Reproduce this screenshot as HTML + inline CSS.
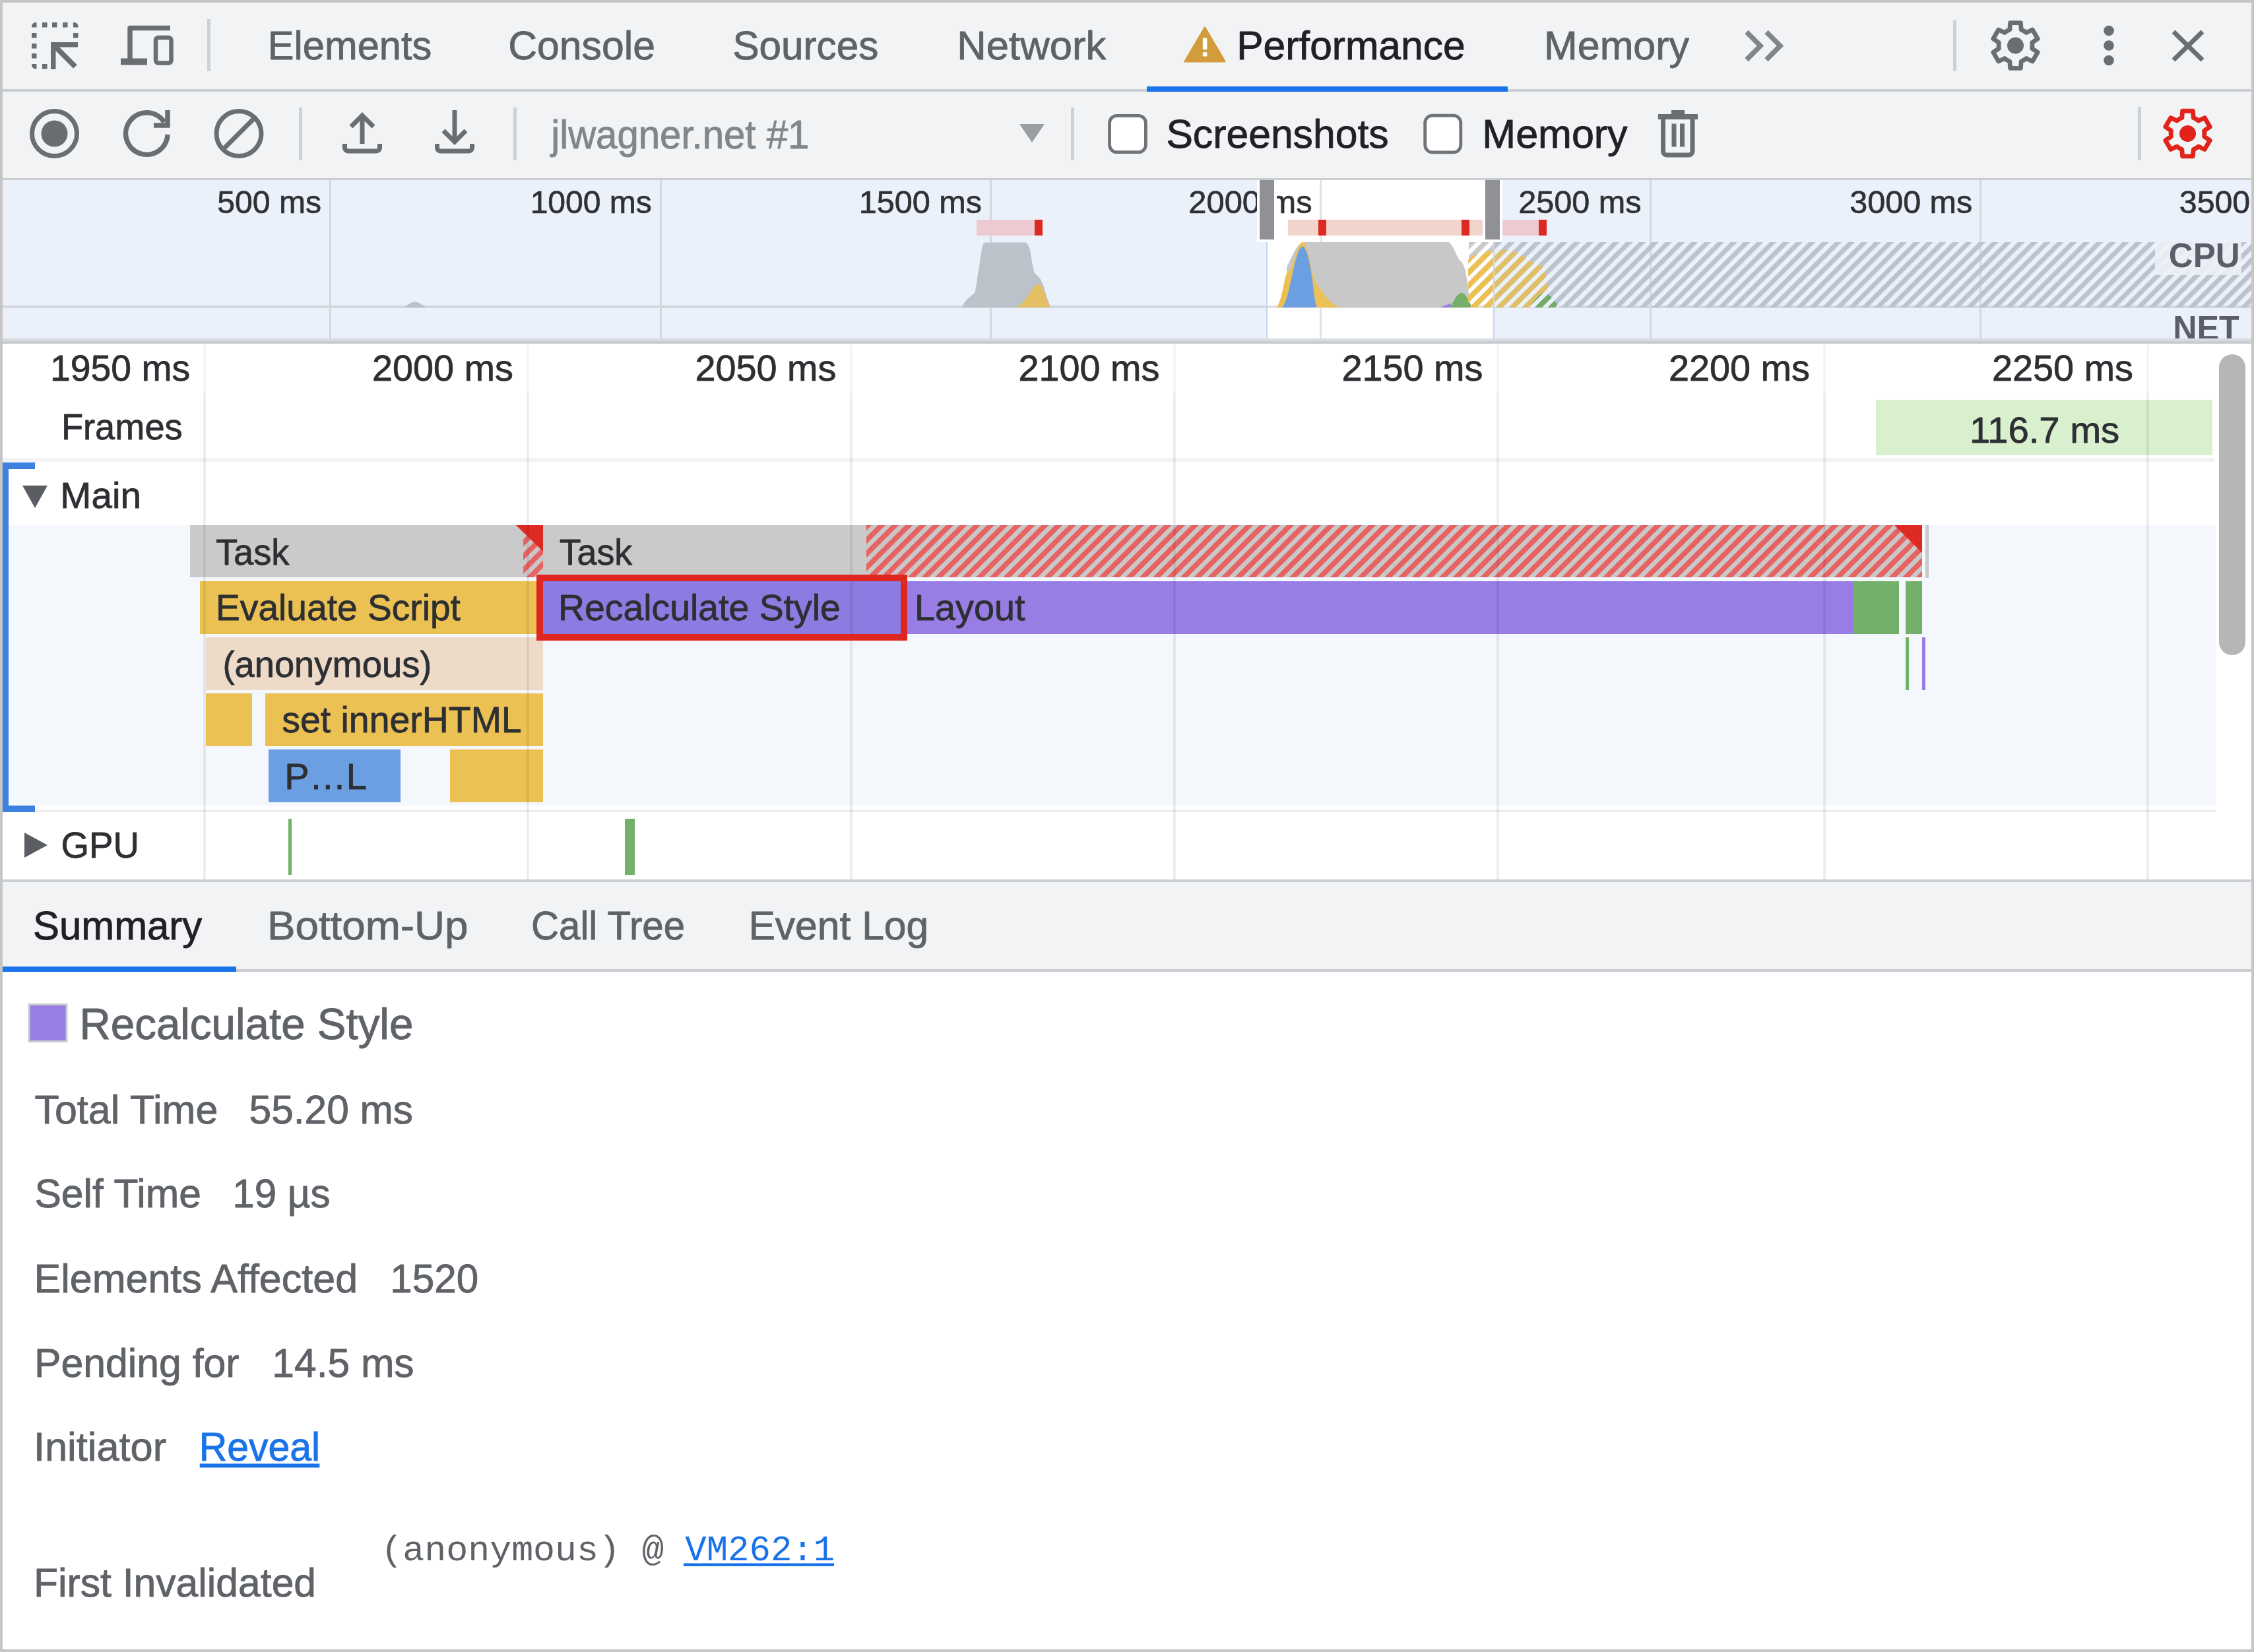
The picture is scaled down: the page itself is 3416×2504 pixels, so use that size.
<!DOCTYPE html>
<html><head><meta charset="utf-8"><title>DevTools Performance</title>
<style>html,body{margin:0;padding:0;background:#c6c6c6;width:3416px;height:2504px;overflow:hidden}</style>
</head><body>
<svg width="3416" height="2504" viewBox="0 0 3416 2504" style="display:block"><rect x="0" y="0" width="3416" height="2504" fill="#c6c6c6"/>
<rect x="4" y="4" width="3408" height="2496" fill="#ffffff" />
<rect x="4" y="4" width="3408" height="131" fill="#f1f3f4" />
<rect x="4" y="135" width="3408" height="4" fill="#cacdd1" />
<path d="M48 41.5 V40 A6 6 0 0 1 54 34 H55.5 V41.5 Z" fill="#6a6d71"/>
<rect x="64" y="34" width="7.5" height="7.5" fill="#6a6d71"/>
<rect x="79" y="34" width="7.5" height="7.5" fill="#6a6d71"/>
<rect x="95" y="34" width="7.5" height="7.5" fill="#6a6d71"/>
<path d="M111 34 H112.5 A6 6 0 0 1 118.5 40 V41.5 H111 Z" fill="#6a6d71"/>
<rect x="48" y="50" width="7.5" height="7.5" fill="#6a6d71"/>
<rect x="48" y="66" width="7.5" height="7.5" fill="#6a6d71"/>
<rect x="48" y="81" width="7.5" height="7.5" fill="#6a6d71"/>
<path d="M48 97 H55.5 V104.5 H54 A6 6 0 0 1 48 98.5 Z" fill="#6a6d71"/>
<rect x="111" y="50" width="7.5" height="7.5" fill="#6a6d71"/>
<rect x="64" y="97" width="7.5" height="7.5" fill="#6a6d71"/>
<rect x="77" y="64" width="41" height="7.5" fill="#6a6d71"/>
<rect x="77" y="64" width="7.5" height="41" fill="#6a6d71"/>
<path d="M82 69 L114 101" stroke="#6a6d71" stroke-width="8"/>
<path d="M258 42.5 H197 V92" fill="none" stroke="#6a6d71" stroke-width="7.5" stroke-linejoin="round"/>
<rect x="183" y="88.5" width="40" height="10" fill="#6a6d71"/>
<rect x="236" y="57" width="23.5" height="38.5" rx="4" fill="none" stroke="#6a6d71" stroke-width="6.5"/>
<rect x="314" y="29" width="5" height="79" fill="#cdd0d4" />
<text x="405.82" y="90.28" font-family='"Liberation Sans", sans-serif' font-size="61" font-weight="normal" fill="#5f6368" stroke="#5f6368" stroke-width="0.85" stroke-linejoin="round" textLength="248.61" lengthAdjust="spacingAndGlyphs">Elements</text>
<text x="770.22" y="90.28" font-family='"Liberation Sans", sans-serif' font-size="61" font-weight="normal" fill="#5f6368" stroke="#5f6368" stroke-width="0.85" stroke-linejoin="round" textLength="222.73" lengthAdjust="spacingAndGlyphs">Console</text>
<text x="1110.42" y="90.28" font-family='"Liberation Sans", sans-serif' font-size="61" font-weight="normal" fill="#5f6368" stroke="#5f6368" stroke-width="0.85" stroke-linejoin="round" textLength="220.92" lengthAdjust="spacingAndGlyphs">Sources</text>
<text x="1450.33" y="90.28" font-family='"Liberation Sans", sans-serif' font-size="61" font-weight="normal" fill="#5f6368" stroke="#5f6368" stroke-width="0.85" stroke-linejoin="round" textLength="225.85" lengthAdjust="spacingAndGlyphs">Network</text>
<path d="M1826 42 L1856 93 L1796 93 Z" fill="#d29c3c" stroke="#d29c3c" stroke-width="3" stroke-linejoin="round"/>
<rect x="1822.8" y="57.5" width="6.6" height="17.8" rx="1.5" fill="#ffffff"/>
<rect x="1822.8" y="79" width="6.6" height="6.6" rx="1.5" fill="#ffffff"/>
<text x="1874.22" y="90.28" font-family='"Liberation Sans", sans-serif' font-size="61" font-weight="normal" fill="#202124" stroke="#202124" stroke-width="0.85" stroke-linejoin="round" textLength="346.34" lengthAdjust="spacingAndGlyphs">Performance</text>
<text x="2340.12" y="90.28" font-family='"Liberation Sans", sans-serif' font-size="61" font-weight="normal" fill="#5f6368" stroke="#5f6368" stroke-width="0.85" stroke-linejoin="round" textLength="219.83" lengthAdjust="spacingAndGlyphs">Memory</text>
<path d="M2647 48.5 L2668 69.5 L2647 90.5 M2677 48.5 L2698 69.5 L2677 90.5" fill="none" stroke="#80868b" stroke-width="7.5"/>
<rect x="1738" y="131" width="547" height="8" fill="#1a73e8" />
<rect x="2960" y="30" width="5" height="78" fill="#cdd0d4" />
<path d="M3041.8 46.9 L3045.8 45.0 L3046.6 34.7 L3062.4 34.7 L3063.2 45.0 L3067.2 46.9 L3070.9 49.5 L3080.2 45.0 L3088.2 58.7 L3079.6 64.6 L3080.0 69.0 L3079.6 73.4 L3088.2 79.3 L3080.2 93.0 L3070.9 88.5 L3067.2 91.1 L3063.2 93.0 L3062.4 103.3 L3046.6 103.3 L3045.8 93.0 L3041.8 91.1 L3038.1 88.5 L3028.8 93.0 L3020.8 79.3 L3029.4 73.4 L3029.0 69.0 L3029.4 64.6 L3020.8 58.7 L3028.8 45.0 L3038.1 49.5 Z" fill="none" stroke="#6a6d71" stroke-width="6.8" stroke-linejoin="round"/>
<circle cx="3054.5" cy="69" r="12.5" fill="#6a6d71"/>
<circle cx="3196" cy="46.5" r="7.8" fill="#6a6d71"/>
<circle cx="3196" cy="69" r="7.8" fill="#6a6d71"/>
<circle cx="3196" cy="91.5" r="7.8" fill="#6a6d71"/>
<path d="M3294 48 L3338 91 M3338 48 L3294 91" stroke="#6a6d71" stroke-width="7"/>
<rect x="4" y="139" width="3408" height="131" fill="#f1f3f4" />
<rect x="4" y="270" width="3408" height="3" fill="#cacdd1" />
<circle cx="82.5" cy="202.5" r="34" fill="none" stroke="#6a6d71" stroke-width="7"/>
<circle cx="82.5" cy="202.5" r="20" fill="#6a6d71"/>
<path d="M254.1 204 A31.8 31.8 0 1 1 249 185.2" fill="none" stroke="#6a6d71" stroke-width="7.5"/>
<path d="M233 190 H254 V167" fill="none" stroke="#6a6d71" stroke-width="7.5"/>
<circle cx="362" cy="202.5" r="34" fill="none" stroke="#6a6d71" stroke-width="7"/>
<path d="M338 226.5 L386 178.5" stroke="#6a6d71" stroke-width="7"/>
<rect x="453" y="163" width="5" height="80" fill="#cdd0d4" />
<path d="M549 218 V176 M532 192 L549 175 L566 192" fill="none" stroke="#6a6d71" stroke-width="7"/>
<path d="M522.5 218 V224 A5 5 0 0 0 527.5 229 H570.5 A5 5 0 0 0 575.5 224 V218" fill="none" stroke="#6a6d71" stroke-width="7"/>
<path d="M689 167 V212 M672 198 L689 215 L706 198" fill="none" stroke="#6a6d71" stroke-width="7"/>
<path d="M662.5 218 V224 A5 5 0 0 0 667.5 229 H710.5 A5 5 0 0 0 715.5 224 V218" fill="none" stroke="#6a6d71" stroke-width="7"/>
<rect x="778" y="163" width="5" height="80" fill="#cdd0d4" />
<text x="835.33" y="224.77" font-family='"Liberation Sans", sans-serif' font-size="61" font-weight="normal" fill="#80868b" stroke="#80868b" stroke-width="0.85" stroke-linejoin="round" textLength="390.96" lengthAdjust="spacingAndGlyphs">jlwagner.net #1</text>
<path d="M1545 188 L1583 188 L1564 216 Z" fill="#9a9da1"/>
<rect x="1623" y="163" width="5" height="80" fill="#cdd0d4" />
<rect x="1681.6" y="175.3" width="54.8" height="55.4" rx="11" fill="#ffffff" stroke="#707378" stroke-width="4.8"/>
<text x="1767.42" y="224.07" font-family='"Liberation Sans", sans-serif' font-size="61" font-weight="normal" fill="#202124" stroke="#202124" stroke-width="0.85" stroke-linejoin="round" textLength="337.21" lengthAdjust="spacingAndGlyphs">Screenshots</text>
<rect x="2159.7" y="175.2" width="54.1" height="55.6" rx="11" fill="#ffffff" stroke="#707378" stroke-width="4.8"/>
<text x="2246.33" y="224.47" font-family='"Liberation Sans", sans-serif' font-size="61" font-weight="normal" fill="#202124" stroke="#202124" stroke-width="0.85" stroke-linejoin="round">Memory</text>
<rect x="2513" y="173" width="60" height="8" fill="#6a6d71"/>
<rect x="2533" y="167" width="20" height="7" fill="#6a6d71"/>
<path d="M2520.5 181 V229 A6 6 0 0 0 2526.5 235 H2559 A6 6 0 0 0 2565 229 V181" fill="none" stroke="#6a6d71" stroke-width="7"/>
<rect x="2533.5" y="187.5" width="7" height="35" fill="#6a6d71"/>
<rect x="2546" y="187.5" width="7" height="35" fill="#6a6d71"/>
<rect x="3240" y="162" width="5" height="81" fill="#cdd0d4" />
<path d="M3302.8 180.4 L3306.8 178.5 L3307.6 168.2 L3323.4 168.2 L3324.2 178.5 L3328.2 180.4 L3331.9 183.0 L3341.2 178.5 L3349.2 192.2 L3340.6 198.1 L3341.0 202.5 L3340.6 206.9 L3349.2 212.8 L3341.2 226.5 L3331.9 222.0 L3328.2 224.6 L3324.2 226.5 L3323.4 236.8 L3307.6 236.8 L3306.8 226.5 L3302.8 224.6 L3299.1 222.0 L3289.8 226.5 L3281.8 212.8 L3290.4 206.9 L3290.0 202.5 L3290.4 198.1 L3281.8 192.2 L3289.8 178.5 L3299.1 183.0 Z" fill="none" stroke="#e2231a" stroke-width="6.8" stroke-linejoin="round"/>
<circle cx="3315.5" cy="202.5" r="12.5" fill="#e2231a"/>
<rect x="4" y="273" width="3408" height="243" fill="#ebf1fa" />
<rect x="1905" y="273" width="372" height="94" fill="#ffffff" />
<rect x="1920" y="367" width="344" height="149" fill="#ffffff" />
<rect x="499" y="273" width="3" height="243" fill="#d3d8df" />
<rect x="1000" y="273" width="3" height="243" fill="#d3d8df" />
<rect x="1500" y="273" width="3" height="243" fill="#d3d8df" />
<rect x="2500" y="273" width="3" height="243" fill="#d3d8df" />
<rect x="3000" y="273" width="3" height="243" fill="#d3d8df" />
<rect x="2000" y="273" width="3" height="243" fill="#e2e2e2" />
<rect x="4" y="463" width="3408" height="4" fill="#d3d8df" />
<rect x="1920" y="463" width="344" height="4" fill="#e0e0e0" />
<defs>
<pattern id="hgray" patternUnits="userSpaceOnUse" width="14" height="14" patternTransform="rotate(45)">
<rect x="0" y="0" width="7.5" height="14" fill="#c9c9c9"/></pattern>
<pattern id="hgrayo" patternUnits="userSpaceOnUse" width="14" height="14" patternTransform="rotate(45)">
<rect x="0" y="0" width="7.2" height="14" fill="#bcc3cd"/></pattern>
<pattern id="hyel" patternUnits="userSpaceOnUse" width="14" height="14" patternTransform="rotate(45)">
<rect x="0" y="0" width="8" height="14" fill="#ecc153"/></pattern>
<pattern id="hyelo" patternUnits="userSpaceOnUse" width="14" height="14" patternTransform="rotate(45)">
<rect x="0" y="0" width="14" height="14" fill="#ebf1fa"/><rect x="0" y="0" width="8" height="14" fill="#e0bf6a"/></pattern>
<pattern id="hgrn" patternUnits="userSpaceOnUse" width="14" height="14" patternTransform="rotate(45)">
<rect x="0" y="0" width="14" height="14" fill="#ebf1fa"/><rect x="0" y="0" width="8" height="14" fill="#72ad68"/></pattern>
<pattern id="hred" patternUnits="userSpaceOnUse" width="14.6" height="14.6" patternTransform="rotate(45)">
<rect x="0" y="0" width="14.6" height="14.6" fill="#cac7c7"/>
<rect x="0" y="0" width="7.8" height="14.6" fill="#e76262"/></pattern>
</defs>
<rect x="1480" y="333" width="100" height="24" fill="#edc9d1" />
<rect x="1568" y="333" width="12" height="24" fill="#dd2a20" />
<rect x="1952" y="333" width="296" height="24" fill="#f1d4cc" />
<rect x="1998" y="333" width="12" height="24" fill="#dd2a20" />
<rect x="2215" y="333" width="12" height="24" fill="#dd2a20" />
<rect x="2277" y="333" width="67" height="24" fill="#edc9d1" />
<rect x="2332" y="333" width="12" height="24" fill="#dd2a20" />
<path d="M611 466 C619 462 623 457.5 629 457.5 C635 457.5 639 462 647 466 Z" fill="#bcc2ca"/>
<path d="M1457.5 466 C1462 458 1466 452 1470 450 L1477 444 C1481 430 1485 390 1489 373 C1490 369 1492 367.4 1495 367.4 L1554 367.4 C1557 368 1559 372 1561 379 C1563 390 1565 405 1568 414 C1574 418 1578 424 1581 432 C1585 445 1588 455 1592 466 Z" fill="#bcc2ca"/>
<path d="M1540 466 C1550 462 1560 445 1566 436 C1570 431 1572 430.7 1574 430.7 C1578 431 1581 438 1584 446 L1591 466 Z" fill="#e2bf62"/>
<path d="M1950 466 L1950 405 C1960 385 1966 367 1978 367 L2196 367 C2205 375 2208 392 2214 396 C2224 405 2224 440 2229 466 Z" fill="#c8c8c8"/>
<path d="M1935 466 C1945 450 1946 415 1952 412 C1962 405 1966 367 1974 367 C1982 367 1986 410 1994 430 C2004 438 2010 460 2032 466 Z" fill="#ecc153"/>
<path d="M1942 466 C1955 462 1960 380 1974 373 C1988 380 1990 455 1996 466 Z" fill="#6b9fe2"/>
<path d="M2182 466 L2198 460 L2200 466 Z" fill="#9a7fe6"/>
<path d="M2197 466 C2205 455 2208 444 2215 444 C2222 444 2226 458 2232 466 Z" fill="#73b06a"/>
<rect x="2226" y="367" width="38" height="99" fill="url(#hgray)"/>
<rect x="2264" y="367" width="1148" height="99" fill="url(#hgrayo)"/>
<clipPath id="cin"><rect x="2200" y="367" width="64" height="99"/></clipPath>
<clipPath id="cout"><rect x="2264" y="367" width="200" height="99"/></clipPath>
<path d="M2225 466 L2225 395 C2230 383 2260 379 2283 379 C2305 380 2320 400 2337 403 C2344 410 2346 430 2346 466 Z" fill="url(#hyel)" clip-path="url(#cin)"/>
<path d="M2225 466 L2225 395 C2230 383 2260 379 2283 379 C2305 380 2320 400 2337 403 C2344 410 2346 430 2346 466 Z" fill="url(#hyelo)" clip-path="url(#cout)"/>
<path d="M2318 466 C2328 452 2334 444 2340 444 C2350 446 2356 455 2363 466 Z" fill="url(#hgrn)"/>
<rect x="1919" y="367" width="2" height="149" fill="#c5d6f2" />
<rect x="2263" y="367" width="2" height="149" fill="#c5d6f2" />
<text x="329.35" y="322.65" font-family='"Liberation Sans", sans-serif' font-size="49" font-weight="normal" fill="#303135" stroke="#303135" stroke-width="0.69" stroke-linejoin="round" textLength="157.79" lengthAdjust="spacingAndGlyphs">500 ms</text>
<text x="803.64" y="322.65" font-family='"Liberation Sans", sans-serif' font-size="49" font-weight="normal" fill="#303135" stroke="#303135" stroke-width="0.69" stroke-linejoin="round" textLength="184.23" lengthAdjust="spacingAndGlyphs">1000 ms</text>
<text x="1301.85" y="322.65" font-family='"Liberation Sans", sans-serif' font-size="49" font-weight="normal" fill="#303135" stroke="#303135" stroke-width="0.69" stroke-linejoin="round" textLength="186.23" lengthAdjust="spacingAndGlyphs">1500 ms</text>
<text x="1801.35" y="322.65" font-family='"Liberation Sans", sans-serif' font-size="49" font-weight="normal" fill="#303135" stroke="#303135" stroke-width="0.69" stroke-linejoin="round" textLength="187.23" lengthAdjust="spacingAndGlyphs">2000 ms</text>
<text x="2301.34" y="322.65" font-family='"Liberation Sans", sans-serif' font-size="49" font-weight="normal" fill="#303135" stroke="#303135" stroke-width="0.69" stroke-linejoin="round" textLength="186.23" lengthAdjust="spacingAndGlyphs">2500 ms</text>
<text x="2803.34" y="322.65" font-family='"Liberation Sans", sans-serif' font-size="49" font-weight="normal" fill="#303135" stroke="#303135" stroke-width="0.69" stroke-linejoin="round" textLength="185.83" lengthAdjust="spacingAndGlyphs">3000 ms</text>
<text x="3302.84" y="322.65" font-family='"Liberation Sans", sans-serif' font-size="49" font-weight="normal" fill="#303135" stroke="#303135" stroke-width="0.69" stroke-linejoin="round" textLength="107.31" lengthAdjust="spacingAndGlyphs">3500</text>
<rect x="1905" y="273" width="30" height="94" fill="#ffffff" />
<rect x="2247" y="273" width="30" height="94" fill="#ffffff" />
<rect x="1909" y="273" width="22" height="90" fill="#909195" />
<rect x="2251" y="273" width="22" height="90" fill="#909195" />
<rect x="3266" y="367" width="131" height="50" fill="rgba(236,240,246,0.9)" />
<text x="3286.80" y="404.90" font-family='"Liberation Sans", sans-serif' font-size="52" font-weight="bold" fill="#5b5d6a" textLength="107.79" lengthAdjust="spacingAndGlyphs">CPU</text>
<text x="3293.20" y="514.70" font-family='"Liberation Sans", sans-serif' font-size="52" font-weight="bold" fill="#5b5d6a" textLength="100.40" lengthAdjust="spacingAndGlyphs">NET</text>
<rect x="4" y="513" width="3408" height="4" fill="#d8dce2" />
<rect x="4" y="517" width="3408" height="4" fill="#c9ccd0" />
<rect x="4" y="796" width="3354" height="425" fill="#f4f7fc" />
<rect x="2843" y="606" width="510" height="84" fill="#d9f0cf" />
<rect x="4" y="694" width="3352" height="6" fill="#f2f3f5" />
<rect x="4" y="1227" width="3354" height="4" fill="#eeeeee" />
<text x="76.09" y="576.81" font-family='"Liberation Sans", sans-serif' font-size="56" font-weight="normal" fill="#2d2f33" stroke="#2d2f33" stroke-width="0.78" stroke-linejoin="round" textLength="212.00" lengthAdjust="spacingAndGlyphs">1950 ms</text>
<text x="563.89" y="576.81" font-family='"Liberation Sans", sans-serif' font-size="56" font-weight="normal" fill="#2d2f33" stroke="#2d2f33" stroke-width="0.78" stroke-linejoin="round" textLength="214.00" lengthAdjust="spacingAndGlyphs">2000 ms</text>
<text x="1053.39" y="576.81" font-family='"Liberation Sans", sans-serif' font-size="56" font-weight="normal" fill="#2d2f33" stroke="#2d2f33" stroke-width="0.78" stroke-linejoin="round" textLength="214.00" lengthAdjust="spacingAndGlyphs">2050 ms</text>
<text x="1543.39" y="576.81" font-family='"Liberation Sans", sans-serif' font-size="56" font-weight="normal" fill="#2d2f33" stroke="#2d2f33" stroke-width="0.78" stroke-linejoin="round" textLength="214.00" lengthAdjust="spacingAndGlyphs">2100 ms</text>
<text x="2033.39" y="576.81" font-family='"Liberation Sans", sans-serif' font-size="56" font-weight="normal" fill="#2d2f33" stroke="#2d2f33" stroke-width="0.78" stroke-linejoin="round" textLength="214.00" lengthAdjust="spacingAndGlyphs">2150 ms</text>
<text x="2528.89" y="576.81" font-family='"Liberation Sans", sans-serif' font-size="56" font-weight="normal" fill="#2d2f33" stroke="#2d2f33" stroke-width="0.78" stroke-linejoin="round" textLength="214.00" lengthAdjust="spacingAndGlyphs">2200 ms</text>
<text x="3018.89" y="576.81" font-family='"Liberation Sans", sans-serif' font-size="56" font-weight="normal" fill="#2d2f33" stroke="#2d2f33" stroke-width="0.78" stroke-linejoin="round" textLength="214.00" lengthAdjust="spacingAndGlyphs">2250 ms</text>
<text x="92.99" y="666.21" font-family='"Liberation Sans", sans-serif' font-size="56" font-weight="normal" fill="#2d2f33" stroke="#2d2f33" stroke-width="0.78" stroke-linejoin="round" textLength="183.62" lengthAdjust="spacingAndGlyphs">Frames</text>
<text x="2984.99" y="670.71" font-family='"Liberation Sans", sans-serif' font-size="56" font-weight="normal" fill="#2d2f33" stroke="#2d2f33" stroke-width="0.78" stroke-linejoin="round" textLength="227.21" lengthAdjust="spacingAndGlyphs">116.7 ms</text>
<rect x="4" y="701" width="49" height="10" fill="#3c80e0" />
<rect x="4" y="701" width="9" height="530" fill="#3c80e0" />
<rect x="4" y="1221" width="49" height="10" fill="#3c80e0" />
<path d="M34 736 L72 736 L53 770 Z" fill="#5a5d61"/>
<text x="91.39" y="769.61" font-family='"Liberation Sans", sans-serif' font-size="56" font-weight="normal" fill="#2d2f33" stroke="#2d2f33" stroke-width="0.78" stroke-linejoin="round" textLength="122.60" lengthAdjust="spacingAndGlyphs">Main</text>
<path d="M37 1262 L72 1281 L37 1300 Z" fill="#5a5d61"/>
<text x="92.39" y="1299.61" font-family='"Liberation Sans", sans-serif' font-size="56" font-weight="normal" fill="#2d2f33" stroke="#2d2f33" stroke-width="0.78" stroke-linejoin="round" textLength="118.57" lengthAdjust="spacingAndGlyphs">GPU</text>
<rect x="288" y="796" width="535" height="79" fill="#cacaca" />
<rect x="793" y="796" width="30" height="79" fill="url(#hred)" />
<rect x="823" y="796" width="490" height="79" fill="#cacaca" />
<rect x="1313" y="796" width="1600" height="79" fill="url(#hred)" />
<path d="M782 796 L823 796 L823 836 Z" fill="#dd2a22"/>
<path d="M2871 796 L2913 796 L2913 838 Z" fill="#dd2a22"/>
<rect x="2918" y="796" width="5" height="80" fill="#c9c9c9" />
<rect x="303" y="881" width="520" height="80" fill="#ecc153" />
<rect x="823" y="881" width="552" height="80" fill="#8d7be2" />
<rect x="1375" y="881" width="1433" height="80" fill="#987de5" />
<rect x="2808" y="881" width="70" height="80" fill="#73b06a" />
<rect x="2888" y="881" width="25" height="80" fill="#73b06a" />
<rect x="312" y="966" width="511" height="80" fill="#eedac8" />
<rect x="2888" y="966" width="5" height="80" fill="#73b06a" />
<rect x="2913" y="966" width="5" height="80" fill="#987de5" />
<rect x="312" y="1051" width="70" height="80" fill="#ecc153" />
<rect x="402" y="1051" width="421" height="80" fill="#ecc153" />
<rect x="407" y="1136" width="200" height="80" fill="#6b9fe2" />
<rect x="682" y="1136" width="141" height="80" fill="#ecc153" />
<rect x="437" y="1241" width="5" height="85" fill="#73b06a" />
<rect x="947" y="1241" width="15" height="85" fill="#73b06a" />
<rect x="308" y="522" width="4" height="74" fill="rgba(0,0,0,0.04)" />
<rect x="308.25" y="596" width="3.5" height="737" fill="rgba(0,0,0,0.08)" />
<rect x="798" y="522" width="4" height="74" fill="rgba(0,0,0,0.04)" />
<rect x="798.25" y="596" width="3.5" height="737" fill="rgba(0,0,0,0.08)" />
<rect x="1288" y="522" width="4" height="74" fill="rgba(0,0,0,0.04)" />
<rect x="1288.25" y="596" width="3.5" height="737" fill="rgba(0,0,0,0.08)" />
<rect x="1778" y="522" width="4" height="74" fill="rgba(0,0,0,0.04)" />
<rect x="1778.25" y="596" width="3.5" height="737" fill="rgba(0,0,0,0.08)" />
<rect x="2268" y="522" width="4" height="74" fill="rgba(0,0,0,0.04)" />
<rect x="2268.25" y="596" width="3.5" height="737" fill="rgba(0,0,0,0.08)" />
<rect x="2763" y="522" width="4" height="74" fill="rgba(0,0,0,0.04)" />
<rect x="2763.25" y="596" width="3.5" height="737" fill="rgba(0,0,0,0.08)" />
<rect x="3253" y="522" width="4" height="74" fill="rgba(0,0,0,0.04)" />
<rect x="3253.25" y="596" width="3.5" height="737" fill="rgba(0,0,0,0.08)" />
<rect x="818" y="876" width="552" height="90" fill="none" stroke="#e0271f" stroke-width="10"/>
<text x="326.99" y="856.41" font-family='"Liberation Sans", sans-serif' font-size="56" font-weight="normal" fill="#2d2f33" stroke="#2d2f33" stroke-width="0.78" stroke-linejoin="round" textLength="111.39" lengthAdjust="spacingAndGlyphs">Task</text>
<text x="847.69" y="856.41" font-family='"Liberation Sans", sans-serif' font-size="56" font-weight="normal" fill="#2d2f33" stroke="#2d2f33" stroke-width="0.78" stroke-linejoin="round" textLength="110.40" lengthAdjust="spacingAndGlyphs">Task</text>
<text x="327.09" y="940.31" font-family='"Liberation Sans", sans-serif' font-size="56" font-weight="normal" fill="#2d2f33" stroke="#2d2f33" stroke-width="0.78" stroke-linejoin="round" textLength="370.87" lengthAdjust="spacingAndGlyphs">Evaluate Script</text>
<text x="845.99" y="940.31" font-family='"Liberation Sans", sans-serif' font-size="56" font-weight="normal" fill="#2d2f33" stroke="#2d2f33" stroke-width="0.78" stroke-linejoin="round" textLength="427.86" lengthAdjust="spacingAndGlyphs">Recalculate Style</text>
<text x="1386.09" y="940.31" font-family='"Liberation Sans", sans-serif' font-size="56" font-weight="normal" fill="#2d2f33" stroke="#2d2f33" stroke-width="0.78" stroke-linejoin="round" textLength="167.35" lengthAdjust="spacingAndGlyphs">Layout</text>
<text x="337.39" y="1025.61" font-family='"Liberation Sans", sans-serif' font-size="56" font-weight="normal" fill="#2d2f33" stroke="#2d2f33" stroke-width="0.78" stroke-linejoin="round" textLength="317.04" lengthAdjust="spacingAndGlyphs">(anonymous)</text>
<text x="427.19" y="1110.11" font-family='"Liberation Sans", sans-serif' font-size="56" font-weight="normal" fill="#2d2f33" stroke="#2d2f33" stroke-width="0.78" stroke-linejoin="round" textLength="363.44" lengthAdjust="spacingAndGlyphs">set innerHTML</text>
<text x="431.29" y="1195.61" font-family='"Liberation Sans", sans-serif' font-size="56" font-weight="normal" fill="#2d2f33" stroke="#2d2f33" stroke-width="0.78" stroke-linejoin="round">P…L</text>
<rect x="3363" y="537" width="40" height="456" rx="20" fill="#b6b6b6"/>
<rect x="4" y="1333" width="3408" height="4" fill="#cacdd1" />
<rect x="4" y="1337" width="3408" height="132" fill="#f1f3f4" />
<rect x="4" y="1469" width="3408" height="4" fill="#cacdd1" />
<rect x="4" y="1465" width="354" height="8" fill="#1a73e8" />
<text x="50.12" y="1424.08" font-family='"Liberation Sans", sans-serif' font-size="61" font-weight="normal" fill="#202124" stroke="#202124" stroke-width="0.85" stroke-linejoin="round" textLength="256.12" lengthAdjust="spacingAndGlyphs">Summary</text>
<text x="404.93" y="1424.08" font-family='"Liberation Sans", sans-serif' font-size="61" font-weight="normal" fill="#5f6368" stroke="#5f6368" stroke-width="0.85" stroke-linejoin="round" textLength="304.66" lengthAdjust="spacingAndGlyphs">Bottom-Up</text>
<text x="804.92" y="1424.08" font-family='"Liberation Sans", sans-serif' font-size="61" font-weight="normal" fill="#5f6368" stroke="#5f6368" stroke-width="0.85" stroke-linejoin="round" textLength="233.21" lengthAdjust="spacingAndGlyphs">Call Tree</text>
<text x="1134.42" y="1424.08" font-family='"Liberation Sans", sans-serif' font-size="61" font-weight="normal" fill="#5f6368" stroke="#5f6368" stroke-width="0.85" stroke-linejoin="round" textLength="272.86" lengthAdjust="spacingAndGlyphs">Event Log</text>
<rect x="44" y="1522.5" width="57" height="56" fill="#987de5" stroke="#c8cbd0" stroke-width="3"/>
<text x="120.47" y="1574.54" font-family='"Liberation Sans", sans-serif' font-size="66.5" font-weight="normal" fill="#5f6368" stroke="#5f6368" stroke-width="0.93" stroke-linejoin="round" textLength="505.87" lengthAdjust="spacingAndGlyphs">Recalculate Style</text>
<text x="52.44" y="1702.57" font-family='"Liberation Sans", sans-serif' font-size="62" font-weight="normal" fill="#5f6368" stroke="#5f6368" stroke-width="0.87" stroke-linejoin="round" textLength="277.88" lengthAdjust="spacingAndGlyphs">Total Time</text>
<text x="377.54" y="1702.57" font-family='"Liberation Sans", sans-serif' font-size="62" font-weight="normal" fill="#5f6368" stroke="#5f6368" stroke-width="0.87" stroke-linejoin="round" textLength="248.55" lengthAdjust="spacingAndGlyphs">55.20 ms</text>
<text x="52.44" y="1830.16" font-family='"Liberation Sans", sans-serif' font-size="62" font-weight="normal" fill="#5f6368" stroke="#5f6368" stroke-width="0.87" stroke-linejoin="round" textLength="252.54" lengthAdjust="spacingAndGlyphs">Self Time</text>
<text x="352.24" y="1830.16" font-family='"Liberation Sans", sans-serif' font-size="62" font-weight="normal" fill="#5f6368" stroke="#5f6368" stroke-width="0.87" stroke-linejoin="round" textLength="148.24" lengthAdjust="spacingAndGlyphs">19 µs</text>
<text x="51.54" y="1958.97" font-family='"Liberation Sans", sans-serif' font-size="62" font-weight="normal" fill="#5f6368" stroke="#5f6368" stroke-width="0.87" stroke-linejoin="round" textLength="490.53" lengthAdjust="spacingAndGlyphs">Elements Affected</text>
<text x="591.33" y="1958.97" font-family='"Liberation Sans", sans-serif' font-size="62" font-weight="normal" fill="#5f6368" stroke="#5f6368" stroke-width="0.87" stroke-linejoin="round" textLength="133.87" lengthAdjust="spacingAndGlyphs">1520</text>
<text x="51.94" y="2086.76" font-family='"Liberation Sans", sans-serif' font-size="62" font-weight="normal" fill="#5f6368" stroke="#5f6368" stroke-width="0.87" stroke-linejoin="round" textLength="310.65" lengthAdjust="spacingAndGlyphs">Pending for</text>
<text x="412.33" y="2086.76" font-family='"Liberation Sans", sans-serif' font-size="62" font-weight="normal" fill="#5f6368" stroke="#5f6368" stroke-width="0.87" stroke-linejoin="round" textLength="215.27" lengthAdjust="spacingAndGlyphs">14.5 ms</text>
<text x="50.94" y="2213.87" font-family='"Liberation Sans", sans-serif' font-size="62" font-weight="normal" fill="#5f6368" stroke="#5f6368" stroke-width="0.87" stroke-linejoin="round" textLength="201.24" lengthAdjust="spacingAndGlyphs">Initiator</text>
<text x="301.74" y="2213.87" font-family='"Liberation Sans", sans-serif' font-size="62" font-weight="normal" fill="#1a73e8" stroke="#1a73e8" stroke-width="0.87" stroke-linejoin="round" textLength="183.34" lengthAdjust="spacingAndGlyphs">Reveal</text>
<rect x="302.7" y="2218.5" width="181.60000000000002" height="6.0" fill="#1a73e8" />
<text x="577.30" y="2364.90" font-family='"Liberation Mono", monospace' font-size="54" font-weight="normal" fill="#5f6368" textLength="428.69" lengthAdjust="spacingAndGlyphs">(anonymous) @</text>
<text x="1038.30" y="2364.90" font-family='"Liberation Mono", monospace' font-size="54" font-weight="normal" fill="#1a73e8">VM262:1</text>
<rect x="1036" y="2369.5" width="228" height="4.5" fill="#1a73e8" />
<text x="50.94" y="2419.87" font-family='"Liberation Sans", sans-serif' font-size="62" font-weight="normal" fill="#5f6368" stroke="#5f6368" stroke-width="0.87" stroke-linejoin="round" textLength="428.18" lengthAdjust="spacingAndGlyphs">First Invalidated</text></svg>
</body></html>
